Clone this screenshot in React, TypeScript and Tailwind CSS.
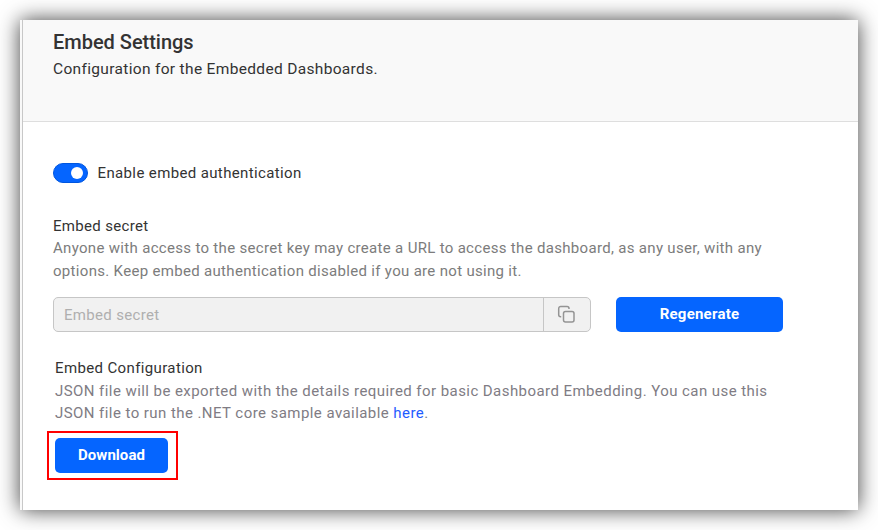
import React from "react";

function CopyIcon() {
  return (
    <svg width="20" height="20" viewBox="0 0 20 20" fill="none" stroke="#949494" strokeWidth="1.500">
      <rect x="6.500" y="6.500" width="10.500" height="10.500" rx="2" />
      <path d="M4.200 11.800h-.5a2 2 0 0 1-2-2v-6.300a2 2 0 0 1 2-2h6.300a2 2 0 0 1 2 2v.5" />
    </svg>
  );
}

export default function App() {
  return (
    <div className="h-[530px] w-[878px] overflow-hidden bg-white p-5 font-[Roboto,sans-serif] text-[15px] leading-[23px] tracking-[0.32px] text-[#333]">
      <main className="flex h-[490px] w-[838px] bg-white shadow-[0_0_20px_rgba(0,0,0,0.75)]">
        <div className="w-[3px] border-r border-[#c8c8c8] bg-[#f9f9f9]" />
        <div className="flex-1">
          <header className="h-[102px] border-b border-[#dedede] bg-[#f9f9f9] pl-[30px] pt-[10px]">
            <h1 className="text-[20px] font-medium leading-6 tracking-[-0.02px]">Embed Settings</h1>
            <p className="mt-1 text-[15.5px] tracking-[0.33px]">Configuration for the Embedded Dashboards.</p>
          </header>
          <section className="pl-[30px] pt-[40px]">
            <div className="flex h-[22px] items-center gap-[9.5px]">
              <button aria-label="Enable embed authentication" className="flex h-5 w-[35px] items-center justify-end rounded-full border border-[#0056df] bg-[#0565ff] pr-1">
                <span className="size-3 rounded-full bg-white" />
              </button>
              <span className="tracking-[0.37px]">Enable embed authentication</span>
            </div>
            <h2 className="mt-[31px] leading-[22px]">Embed secret</h2>
            <p className="tracking-[0.315px] text-[#7c7c7c]">Anyone with access to the secret key may create a URL to access the dashboard, as any user, with any<br />options. Keep embed authentication disabled if you are not using it.</p>
            <div className="mt-[14px] flex gap-[25px]">
              <div className="flex h-[35px] w-[538px] overflow-hidden rounded-[5px] border border-[#c6c6c6] bg-[#f1f1f1] text-[#afafaf]">
                <div className="flex w-[490px] items-center border-r border-[#c6c6c6] pl-[10px] pt-0.5">Embed secret</div>
                <div className="flex flex-1 items-center justify-center"><CopyIcon /></div>
              </div>
              <button className="h-[35px] w-[167px] rounded-[5px] bg-[#0565ff] font-bold tracking-[0.22px] text-white">Regenerate</button>
            </div>
            <div className="pl-[2px]">
              <h2 className="mt-[25px] leading-[22px] tracking-[0.37px]">Embed Configuration</h2>
              <p className="pb-px pt-[1px] leading-[22px] tracking-[0.435px] text-[#807c84]">JSON file will be exported with the details required for basic Dashboard Embedding. You can use this<br />JSON file to run the .NET core sample available <a className="text-[#1f5cff]">here</a>.</p>
              <div className="-ml-2 mt-[6px] h-[49px] w-[131px] border-2 border-[#ff0000] pl-[6px] pt-[5px]">
                <button className="block h-[35px] w-[113px] rounded-[5px] bg-[#0565ff] font-bold tracking-[0.05px] text-white">Download</button>
              </div>
            </div>
          </section>
        </div>
      </main>
    </div>
  );
}
